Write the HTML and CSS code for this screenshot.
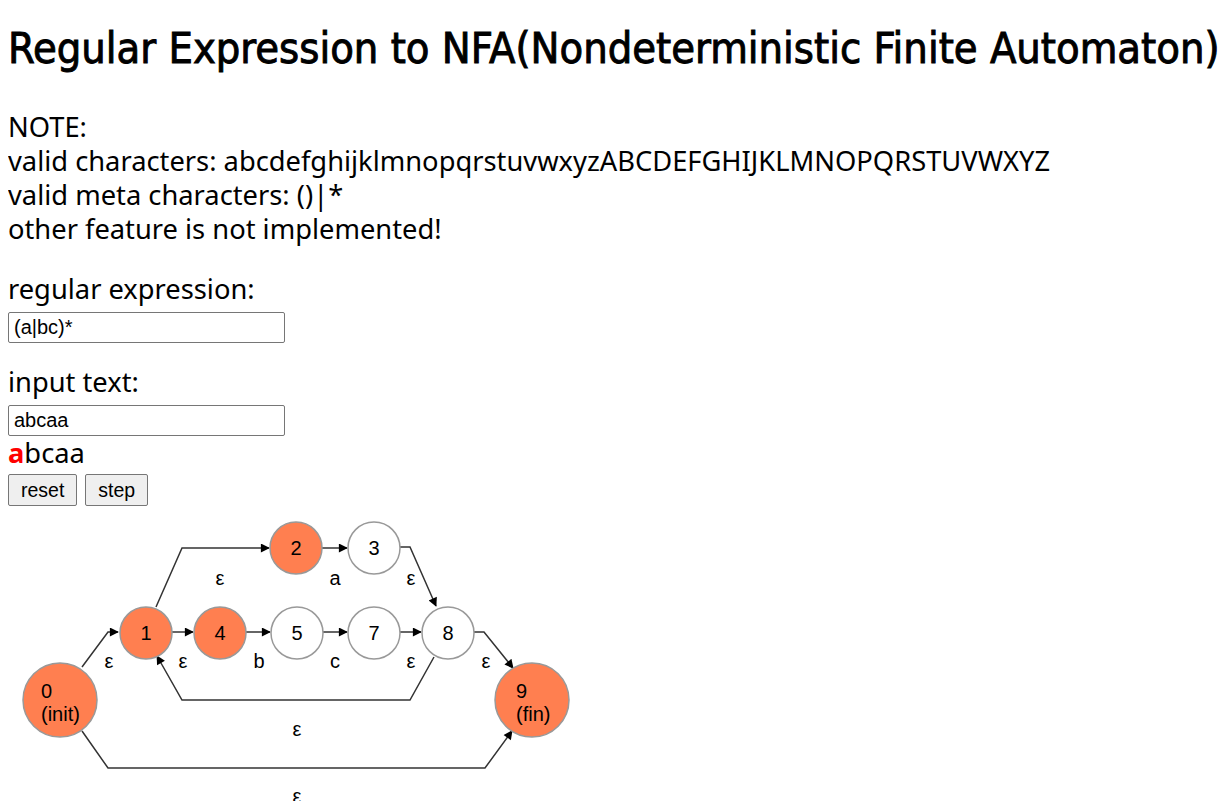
FILE: index.html
```html
<!DOCTYPE html>
<html lang="en">
<head>
    <meta charset="UTF-8">
    <title>Regular Expression to NFA</title>
    <link rel="stylesheet" href="styles.css">
</head>
<body>
    <h1>Regular Expression to NFA(Nondeterministic Finite Automaton)</h1>

    <p class="note">
        NOTE:<br>
        valid characters: abcdefghijklmnopqrstuvwxyzABCDEFGHIJKLMNOPQRSTUVWXYZ<br>
        valid meta characters: ()|*<br>
        other feature is not implemented!
    </p>

    <div class="field">
        <label for="regex">regular expression:</label>
        <input type="text" id="regex" value="(a|bc)*">
    </div>

    <div class="field">
        <label for="text">input text:</label>
        <input type="text" id="text" value="abcaa">
    </div>

    <div class="progress"><span class="current">a</span>bcaa</div>

    <div class="buttons">
        <button id="reset">reset</button>
        <button id="step">step</button>
    </div>

    <svg class="graph" width="600" height="287" viewBox="8 514 600 287">
        <defs>
            <marker id="arrow" viewBox="0 0 10 10" refX="9" refY="5" markerWidth="8" markerHeight="6" orient="auto" markerUnits="strokeWidth">
                <path d="M0,0 L10,5 L0,10 z" fill="#000"></path>
            </marker>
        </defs>

        <!-- edges -->
        <g class="edges">
            <path d="M82,667 L108,632 L118,632"></path>
            <path d="M156,607 L182,548 L269,548"></path>
            <path d="M172,632 L193,632"></path>
            <path d="M246,632 L270,632"></path>
            <path d="M323,632 L347,632"></path>
            <path d="M400,632 L421,632"></path>
            <path d="M322,548 L347,548"></path>
            <path d="M400,547 L410,547 L436,606"></path>
            <path d="M474,632 L484,632 L513,668"></path>
            <path d="M434,657 L410,700 L182,700 L157,656"></path>
            <path d="M82,731 L108,768 L485,768 L512,731"></path>
        </g>

        <g class="labels">
            <text x="109" y="668">ε</text>
            <text x="220" y="585">ε</text>
            <text x="183" y="668">ε</text>
            <text x="259" y="668">b</text>
            <text x="335" y="668">c</text>
            <text x="411" y="668">ε</text>
            <text x="335" y="585">a</text>
            <text x="411" y="585">ε</text>
            <text x="486" y="668">ε</text>
            <text x="297" y="736">ε</text>
            <text x="297" y="803">ε</text>
        </g>

        <!-- nodes -->
        <g class="nodes">
            <circle class="active" cx="60" cy="700" r="37"></circle>
            <text x="41" y="698">0</text>
            <text x="41" y="721">(init)</text>

            <circle class="active" cx="146" cy="633" r="26"></circle>
            <text class="mid" x="146" y="640">1</text>

            <circle class="active" cx="220" cy="633" r="26"></circle>
            <text class="mid" x="220" y="640">4</text>

            <circle cx="297" cy="633" r="26"></circle>
            <text class="mid" x="297" y="640">5</text>

            <circle cx="374" cy="633" r="26"></circle>
            <text class="mid" x="374" y="640">7</text>

            <circle cx="448" cy="633" r="26"></circle>
            <text class="mid" x="448" y="640">8</text>

            <circle class="active" cx="296" cy="548" r="26"></circle>
            <text class="mid" x="296" y="555">2</text>

            <circle cx="374" cy="548" r="26"></circle>
            <text class="mid" x="374" y="555">3</text>

            <circle class="active" cx="532" cy="700" r="37"></circle>
            <text x="516" y="698">9</text>
            <text x="516" y="721">(fin)</text>
        </g>
    </svg>
</body>
</html>
```

FILE: styles.css
```css
body {
    margin: 8px;
    font-family: "Noto Sans", sans-serif;
    font-size: 27.3px;
    line-height: 34px;
    color: #000;
}
h1 {
    font-family: "DejaVu Sans Condensed", "DejaVu Sans", sans-serif;
    font-size: 43px;
    font-weight: normal;
    -webkit-text-stroke: 0.9px #000;
    line-height: 50px;
    white-space: nowrap;
    margin: 15px 0 37px;
}
.note {
    margin: 0 0 26px;
}
.field {
    margin-bottom: 22px;
}
.field label {
    display: block;
    margin-bottom: 6px;
}
.field input {
    display: block;
    width: 277px;
    height: 31px;
    box-sizing: border-box;
    padding: 1px 5px;
    border: 1px solid #767676;
    border-radius: 2px;
    font-family: "Liberation Sans", Arial, sans-serif;
    font-size: 20px;
}
.field:nth-of-type(2) {
    margin-bottom: 0;
}
.progress {
    margin-bottom: 4px;
}
.current {
    color: red;
    font-weight: bold;
}
.buttons {
    display: flex;
    gap: 8px;
}
button {
    font-family: "Liberation Sans", Arial, sans-serif;
    font-size: 19.5px;
    height: 32px;
    padding: 0 12px;
    background: #efefef;
    border: 1px solid #767676;
    border-radius: 2px;
}
.graph {
    display: block;
    margin-top: 8px;
    font-family: "Liberation Sans", Arial, sans-serif;
    font-size: 20px;
}
.edges path {
    fill: none;
    stroke: #333;
    stroke-width: 1.5px;
    marker-end: url(#arrow);
}
.labels text {
    text-anchor: middle;
}
.nodes circle {
    fill: #fff;
    stroke: #999;
    stroke-width: 1.5px;
}
.nodes circle.active {
    fill: coral;
}
.nodes text.mid {
    text-anchor: middle;
}
```
